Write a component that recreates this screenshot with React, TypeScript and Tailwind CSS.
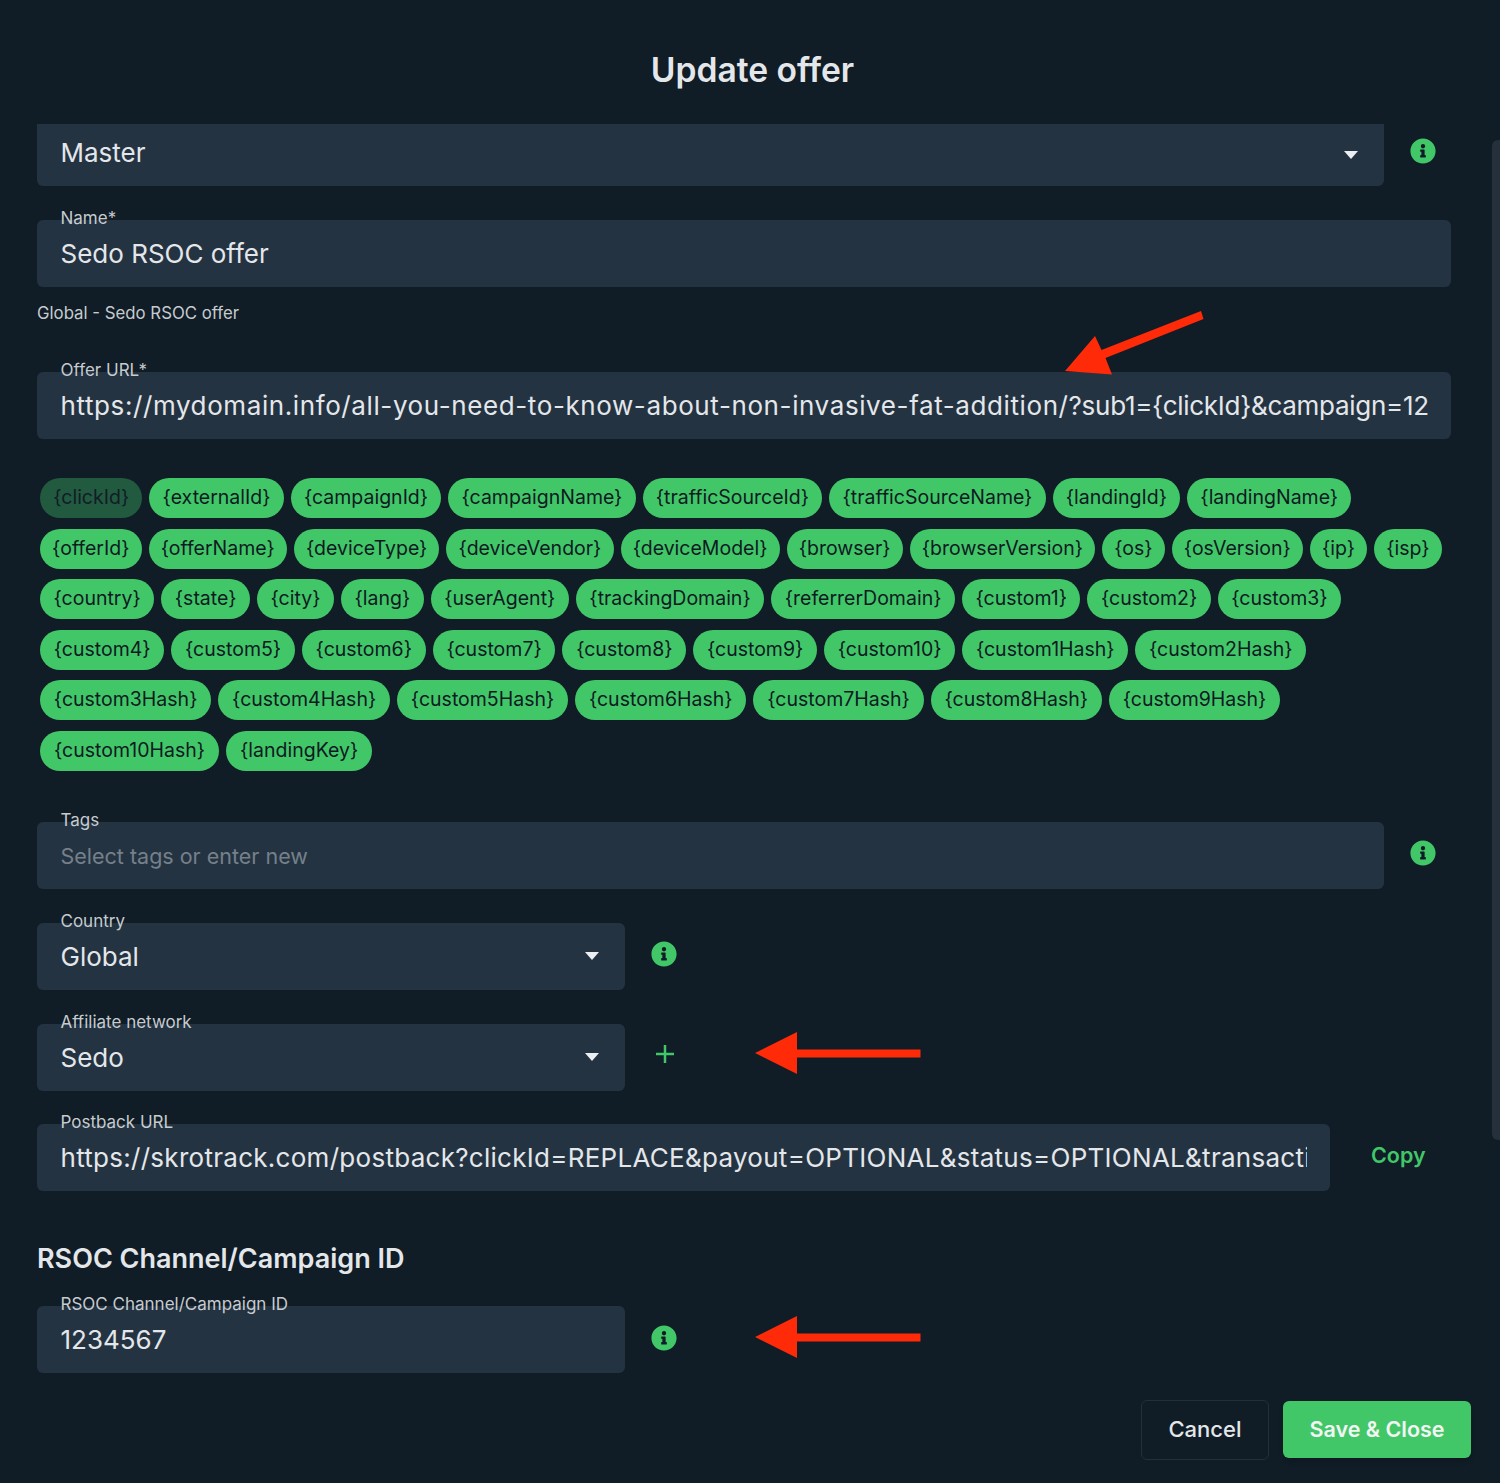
import { FC, ReactNode } from "react";
import { FaInfoCircle } from "react-icons/fa";

const rows = [
  {
    pad: "px-[13.200px]",
    tags: ["{clickId}", "{externalId}", "{campaignId}", "{campaignName}", "{trafficSourceId}", "{trafficSourceName}", "{landingId}", "{landingName}"],
  },
  {
    pad: "px-[12.100px]",
    tags: ["{offerId}", "{offerName}", "{deviceType}", "{deviceVendor}", "{deviceModel}", "{browser}", "{browserVersion}", "{os}", "{osVersion}", "{ip}", "{isp}"],
  },
  {
    pad: "px-[13.500px]",
    tags: ["{country}", "{state}", "{city}", "{lang}", "{userAgent}", "{trackingDomain}", "{referrerDomain}", "{custom1}", "{custom2}", "{custom3}"],
  },
  {
    pad: "px-[13.700px]",
    tags: ["{custom4}", "{custom5}", "{custom6}", "{custom7}", "{custom8}", "{custom9}", "{custom10}", "{custom1Hash}", "{custom2Hash}"],
  },
  {
    pad: "px-[13.800px]",
    tags: ["{custom3Hash}", "{custom4Hash}", "{custom5Hash}", "{custom6Hash}", "{custom7Hash}", "{custom8Hash}", "{custom9Hash}"],
  },
  {
    pad: "px-[14px]",
    tags: ["{custom10Hash}", "{landingKey}"],
  },
];

type FieldProps = {
  label?: string;
  className?: string;
  caret?: boolean;
  children: ReactNode;
};

const Field: FC<FieldProps> = ({ label, className = "", caret, children }) => {
  return (
    <div className={`relative shrink-0 rounded-md bg-[#243342] pl-[23.500px] flex items-center ${className}`}>
      {label && (
        <span className="absolute left-[23.500px] top-[-12px] text-[17px] leading-[20px] text-[#c6cbcf]">{label}</span>
      )}
      <div className="min-w-0 flex-1 overflow-hidden whitespace-nowrap text-[26px] leading-[34px] text-[#e4e7ea]">
        {children}
      </div>
      {caret && (
        <svg className="absolute right-[26px] top-[calc(50%-4px)]" width="14" height="8" viewBox="0 0 14 8">
          <path d="M0 0h14L7 8z" fill="#eceff1" />
        </svg>
      )}
    </div>
  );
};

const Info: FC<{ className?: string }> = ({ className = "" }) => (
  <FaInfoCircle className={`shrink-0 text-[#41c768] ${className}`} size={26} />
);

const Arrows = () => (
  <svg className="absolute left-0 top-0 pointer-events-none" width="1500" height="1483" viewBox="0 0 1500 1483">
    <path d="M1201 311l2.500 8-98 39 6.500 16.500-47-3.500 30-35 6.500 14z" fill="#ff2a08" />
    <path d="M755 1053l42-21v17.500h123.500v8H797V1074z" fill="#ff2a08" />
    <path d="M755 1337l42-21v17.500h123.500v8H797V1358z" fill="#ff2a08" />
  </svg>
);

export default function App() {
  return (
    <div className="relative flex h-[1483px] w-[1500px] flex-col overflow-hidden bg-[#101c26] font-['Inter',sans-serif]">
      <h1 className="h-[124px] shrink-0 pl-[5px] pt-[49px] text-center text-[33.600px] font-semibold leading-[42px] text-[#e4e7ea]">
        Update offer
      </h1>

      <div className="flex flex-col pl-[37px]">
        <div className="flex items-center gap-[26px]">
          <Field caret className="h-[62px] w-[1347px] rounded-t-none pb-[4px]">Master</Field>
          <Info className="mb-[8px]" />
        </div>

        <Field label="Name*" className="mt-[34px] h-[67px] w-[1414px]">Sedo RSOC offer</Field>
        <p className="mt-[15px] text-[16.800px] leading-[22px] text-[#c6cbcf]">Global - Sedo RSOC offer</p>

        <Field label="Offer URL*" className="mt-[48px] h-[67px] w-[1414px] pr-[23px]">
          <span className="tracking-[0.6px]">https://mydomain.info/all-you-need-to-know-about-non-invasive-fat-addition/</span>
          <span className="tracking-[-0.28px]">?sub1=&#123;clickId&#125;&amp;campaign=1234567</span>
        </Field>

        <div className="mt-[39px] flex flex-col gap-y-[10.500px] pl-[3px]">
          {rows.map((row) => (
            <div key={row.tags[0]} className="flex gap-x-[7px]">
              {row.tags.map((tag) => (
                <span
                  key={tag}
                  className={`flex h-[40px] items-center rounded-[20px] text-[19.500px] ${row.pad} ${
                    tag === "{clickId}" ? "bg-[#215a3f] text-[#111d27]" : "bg-[#41c768] text-[#0d1a22]"
                  }`}
                >
                  {tag}
                </span>
              ))}
            </div>
          ))}
        </div>

        <div className="mt-[51px] flex items-center gap-[26px]">
          <Field label="Tags" className="h-[67px] w-[1347px] pt-[1px]">
            <span className="text-[21.500px] text-[#75808a]">Select tags or enter new</span>
          </Field>
          <Info className="mb-[4px]" />
        </div>

        <div className="mt-[34px] flex items-center gap-[26px]">
          <Field label="Country" caret className="h-[67px] w-[588px] pt-[1px]">Global</Field>
          <Info className="mb-[4px]" />
        </div>

        <div className="mt-[34px] flex items-center gap-[31px]">
          <Field label="Affiliate network" caret className="h-[67px] w-[588px] pt-[1px]">Sedo</Field>
          <svg className="mb-[6px]" width="18" height="18" viewBox="0 0 18 18">
            <path d="M9 0v18M0 9h18" stroke="#41c768" strokeWidth="2.500" />
          </svg>
        </div>

        <div className="mt-[33px] flex items-center gap-[41px]">
          <Field label="Postback URL" className="h-[67px] w-[1293px] pr-[23px] pt-[2px]">
            <span className="tracking-[0.28px]">
              https://skrotrack.com/postback?clickId=REPLACE&amp;payout=OPTIONAL&amp;status=OPTIONAL&amp;transaction
            </span>
          </Field>
          <span className="mb-[3px] text-[21.500px] font-semibold text-[#41c768]">Copy</span>
        </div>

        <h2 className="mt-[51px] text-[27px] font-semibold leading-[34px] text-[#e4e7ea]">RSOC Channel/Campaign ID</h2>

        <div className="mt-[30px] flex items-center gap-[26px]">
          <Field label="RSOC Channel/Campaign ID" className="h-[67px] w-[588px] pt-[1px]">1234567</Field>
          <Info className="mb-[3px]" />
        </div>
      </div>

      <div className="mt-[27px] flex items-center justify-end gap-[14px] pr-[29px]">
        <button className="h-[60px] w-[128px] rounded-md border border-[#232f3a] text-[22px] font-medium text-[#e4e7ea]">
          Cancel
        </button>
        <button className="h-[57px] w-[188px] rounded-md bg-[#41c768] text-[21.500px] font-semibold text-[#f2f5f3] shadow-md">
          Save &amp; Close
        </button>
      </div>

      <div className="absolute right-0 top-[140px] h-[1000px] w-[8px] rounded-l-md bg-[#25303c]" />
      <Arrows />
    </div>
  );
}
